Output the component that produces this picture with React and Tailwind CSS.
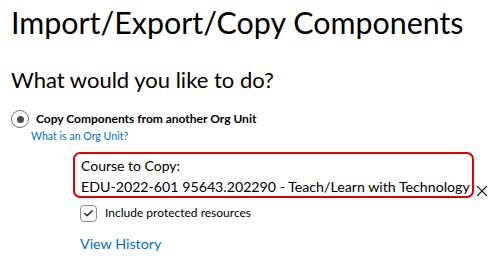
import { X, Check } from "lucide-react"

const App = () => {
  return (
    <div className="w-[500px] h-[264px] bg-white overflow-hidden text-[#202122]" style={{ fontFamily: "Lato, 'Noto Sans', sans-serif" }}>
      <div className="pl-[11px] pt-[2px]">
        <h1 className="text-[30.4px] leading-[40px] font-normal text-black">Import/Export/Copy Components</h1>
        <h2 className="mt-[24px] text-[22px] leading-[28px] font-normal text-black">What would you like to do?</h2>

        {/* Option */}
        <div className="mt-[16px] flex items-center">
          <div className="w-[18px] h-[18px] rounded-full border border-[#6e7477] flex items-center justify-center">
            <div className="w-[7px] h-[7px] rounded-full bg-[#494c4e]"></div>
          </div>
          <span className="ml-[7px] text-[12px] font-bold text-black">Copy Components from another Org Unit</span>
        </div>
        <a className="block ml-[20px] mt-[1px] text-[10.6px] leading-[14px] text-[#006fbf]">What is an Org Unit?</a>

        <div className="ml-[62px] mt-[9px]">
          <div className="flex items-end">
            <div className="w-[401px] h-[46px] border-2 border-[#e00000] rounded-[7px] pl-[6px] pt-[2px]">
              <div className="text-[14px] leading-[20px] text-black">Course to Copy:</div>
              <div className="text-[14.2px] leading-[22px] text-black whitespace-nowrap">EDU-2022-601 95643.202290 - Teach/Learn with Technology</div>
            </div>
            <X className="w-[18px] h-[18px] ml-[-1px] mb-[-2px] text-[#222]" strokeWidth={1.6} />
          </div>
          <div className="mt-[6px] ml-[7px] flex items-center">
            <div className="w-[17px] h-[17px] rounded-[4px] border border-[#8a8f92] bg-[#f9fbff] flex items-center justify-center">
              <Check className="w-[11px] h-[11px] text-[#202122]" strokeWidth={3} />
            </div>
            <span className="ml-[8px] text-[12px] text-black">Include protected resources</span>
          </div>
          <a className="block ml-[7px] mt-[12px] text-[14.3px] leading-[20px] text-[#006fbf]">View History</a>
        </div>
      </div>
    </div>
  )
}

export default App
